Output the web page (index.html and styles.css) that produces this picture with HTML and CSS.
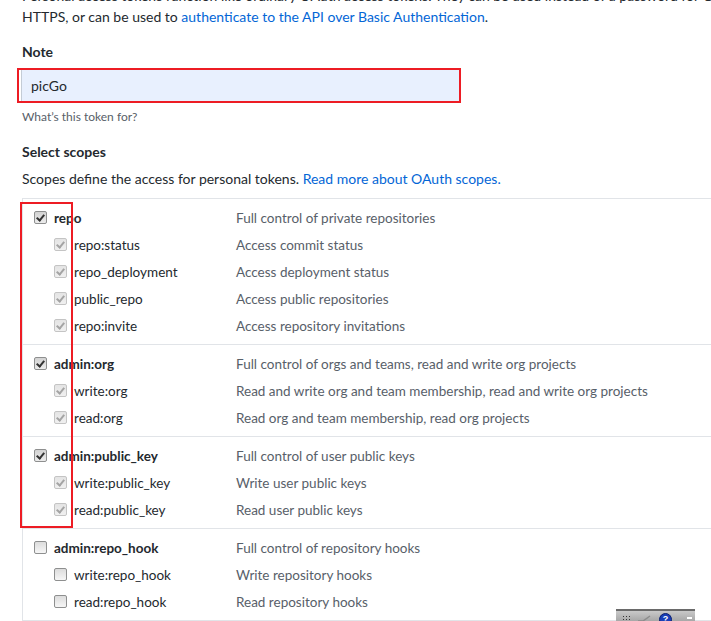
FILE: index.html
```html
<!DOCTYPE html>
<html>
<head>
<meta charset="utf-8">
<link rel="stylesheet" href="styles.css">
</head>
<body>
<div class="page">
  <p class="intro"><span>Personal access tokens function like ordinary OAuth access tokens. They can be used instead of a password for Git over</span><br>HTTPS, or can be used to <a href="#">authenticate to the API over Basic Authentication</a>.</p>
  <div class="label note-label">Note</div>
  <div class="note-box"><div class="note-input">picGo</div></div>
  <div class="hint">What’s this token for?</div>
  <div class="label scopes-label">Select scopes</div>
  <p class="scopes-desc">Scopes define the access for personal tokens. <a href="#">Read more about OAuth scopes.</a></p>

  <div class="scopes">
    <div class="group">
      <div class="row parent"><div class="name"><span class="cb checked"></span>repo</div><div class="desc">Full control of private repositories</div></div>
      <div class="row child"><div class="name"><span class="cb disabled"></span>repo:status</div><div class="desc">Access commit status</div></div>
      <div class="row child"><div class="name"><span class="cb disabled"></span>repo_deployment</div><div class="desc">Access deployment status</div></div>
      <div class="row child"><div class="name"><span class="cb disabled"></span>public_repo</div><div class="desc">Access public repositories</div></div>
      <div class="row child"><div class="name"><span class="cb disabled"></span>repo:invite</div><div class="desc">Access repository invitations</div></div>
    </div>
    <div class="group">
      <div class="row parent"><div class="name"><span class="cb checked"></span>admin:org</div><div class="desc">Full control of orgs and teams, read and write org projects</div></div>
      <div class="row child"><div class="name"><span class="cb disabled"></span>write:org</div><div class="desc">Read and write org and team membership, read and write org projects</div></div>
      <div class="row child"><div class="name"><span class="cb disabled"></span>read:org</div><div class="desc">Read org and team membership, read org projects</div></div>
    </div>
    <div class="group">
      <div class="row parent"><div class="name"><span class="cb checked"></span>admin:public_key</div><div class="desc">Full control of user public keys</div></div>
      <div class="row child"><div class="name"><span class="cb disabled"></span>write:public_key</div><div class="desc">Write user public keys</div></div>
      <div class="row child"><div class="name"><span class="cb disabled"></span>read:public_key</div><div class="desc">Read user public keys</div></div>
    </div>
    <div class="group">
      <div class="row parent"><div class="name"><span class="cb"></span>admin:repo_hook</div><div class="desc">Full control of repository hooks</div></div>
      <div class="row child"><div class="name"><span class="cb"></span>write:repo_hook</div><div class="desc">Write repository hooks</div></div>
      <div class="row child"><div class="name"><span class="cb"></span>read:repo_hook</div><div class="desc">Read repository hooks</div></div>
    </div>
  </div>
</div>

<div class="annotation"></div>

<div class="ime">
  <span class="ime-grid"></span>
  <svg class="ime-arrow" width="14" height="8" viewBox="0 0 14 8"><path d="M1 7 L6 7 L13 2" fill="none" stroke="#8c8c8c" stroke-width="1.5"/></svg>
  <span class="ime-help">?</span>
  <span class="ime-min"></span>
</div>
</body>
</html>
```
FILE: styles.css
```css
html, body {
  margin: 0;
  padding: 0;
  overflow: hidden;
  background: #fff;
}
body {
  position: relative;
  width: 711px;
  height: 621px;
  font-family: Lato, "Segoe UI", "Noto Sans", sans-serif;
  font-size: 14px;
  color: #24292e;
}
a {
  color: #0366d6;
  text-decoration: none;
}
.page {
  padding-left: 22px;
}
.intro {
  margin: -15px 0 0;
  line-height: 21px;
  white-space: nowrap;
}
.label {
  font-weight: 700;
  line-height: 20px;
}
.note-label {
  margin-top: 15px;
}
.note-box {
  margin: 6px 0 0 -5px;
  width: 440px;
  height: 31px;
  border: 2px solid #ed1c24;
}
.note-input {
  height: 31px;
  line-height: 31px;
  margin-left: 2px;
  padding-left: 10px;
  background: #e8f0fe;
  box-shadow: inset 1px 0 0 #c4ccd6;
  font-size: 14px;
}
.hint {
  margin-top: 5px;
  font-size: 12px;
  line-height: 18px;
  color: #586069;
}
.scopes-label {
  margin-top: 16px;
}
.scopes-desc {
  margin: 7px 0 0;
  line-height: 20px;
}
.scopes {
  margin-top: 9px;
  width: 720px;
  border: 1px solid #e1e4e8;
  font-size: 13.5px;
}
.group {
  padding: 5px 0;
}
.group + .group {
  border-top: 1px solid #e1e4e8;
}
.row {
  display: grid;
  grid-template-columns: 213px 1fr;
  height: 27px;
  align-items: center;
}
.name {
  display: flex;
  align-items: center;
  padding-left: 11px;
}
.parent .name {
  font-weight: 700;
}
.child .name {
  padding-left: 31px;
}
.desc {
  color: #586069;
  white-space: nowrap;
}
.cb {
  position: relative;
  box-sizing: border-box;
  width: 13px;
  height: 13px;
  margin-right: 7px;
  border: 1px solid #8e8f8f;
  border-radius: 2px;
  background: linear-gradient(#dcdcdc, #f6f6f6);
  flex: none;
}
.cb.checked {
  background: linear-gradient(#d2d2d2, #ececec);
}
.cb.checked::after,
.cb.disabled::after {
  content: "";
  position: absolute;
  left: 3px;
  top: 1px;
  width: 3px;
  height: 6px;
  border-right: 2px solid #333;
  border-bottom: 2px solid #333;
  transform: rotate(40deg);
}
.cb.disabled {
  border-color: #c4c4c4;
  background: linear-gradient(#e4e4e4, #f0f0f0);
}
.cb.disabled::after {
  border-color: #a4a4a4;
}
.annotation {
  position: absolute;
  left: 20px;
  top: 202px;
  width: 49px;
  height: 322px;
  border: 2px solid #ed1c24;
}
.ime {
  position: absolute;
  left: 616px;
  top: 609px;
  width: 79px;
  height: 12px;
  border-top: 2px solid #6a6a6a;
  background: linear-gradient(#c9c9c9, #9a9a9a);
  display: flex;
  align-items: flex-start;
  padding-top: 2px;
  box-sizing: content-box;
}
.ime-grid {
  width: 9px;
  height: 6px;
  margin: 2px 0 0 6px;
  background-image: radial-gradient(circle, #333 0.8px, transparent 1px);
  background-size: 3px 3px;
}
.ime-arrow {
  margin: 1px 0 0 6px;
}
.ime-help {
  width: 11px;
  height: 11px;
  margin-left: 8px;
  border-radius: 50%;
  background: #1a3fb8;
  border: 1px solid #0b1f6e;
  color: #fff;
  font: bold 9px/11px "Liberation Sans", sans-serif;
  text-align: center;
}
.ime-min {
  width: 5px;
  height: 2px;
  margin: 4px 0 0 15px;
  background: #fff;
}
```
